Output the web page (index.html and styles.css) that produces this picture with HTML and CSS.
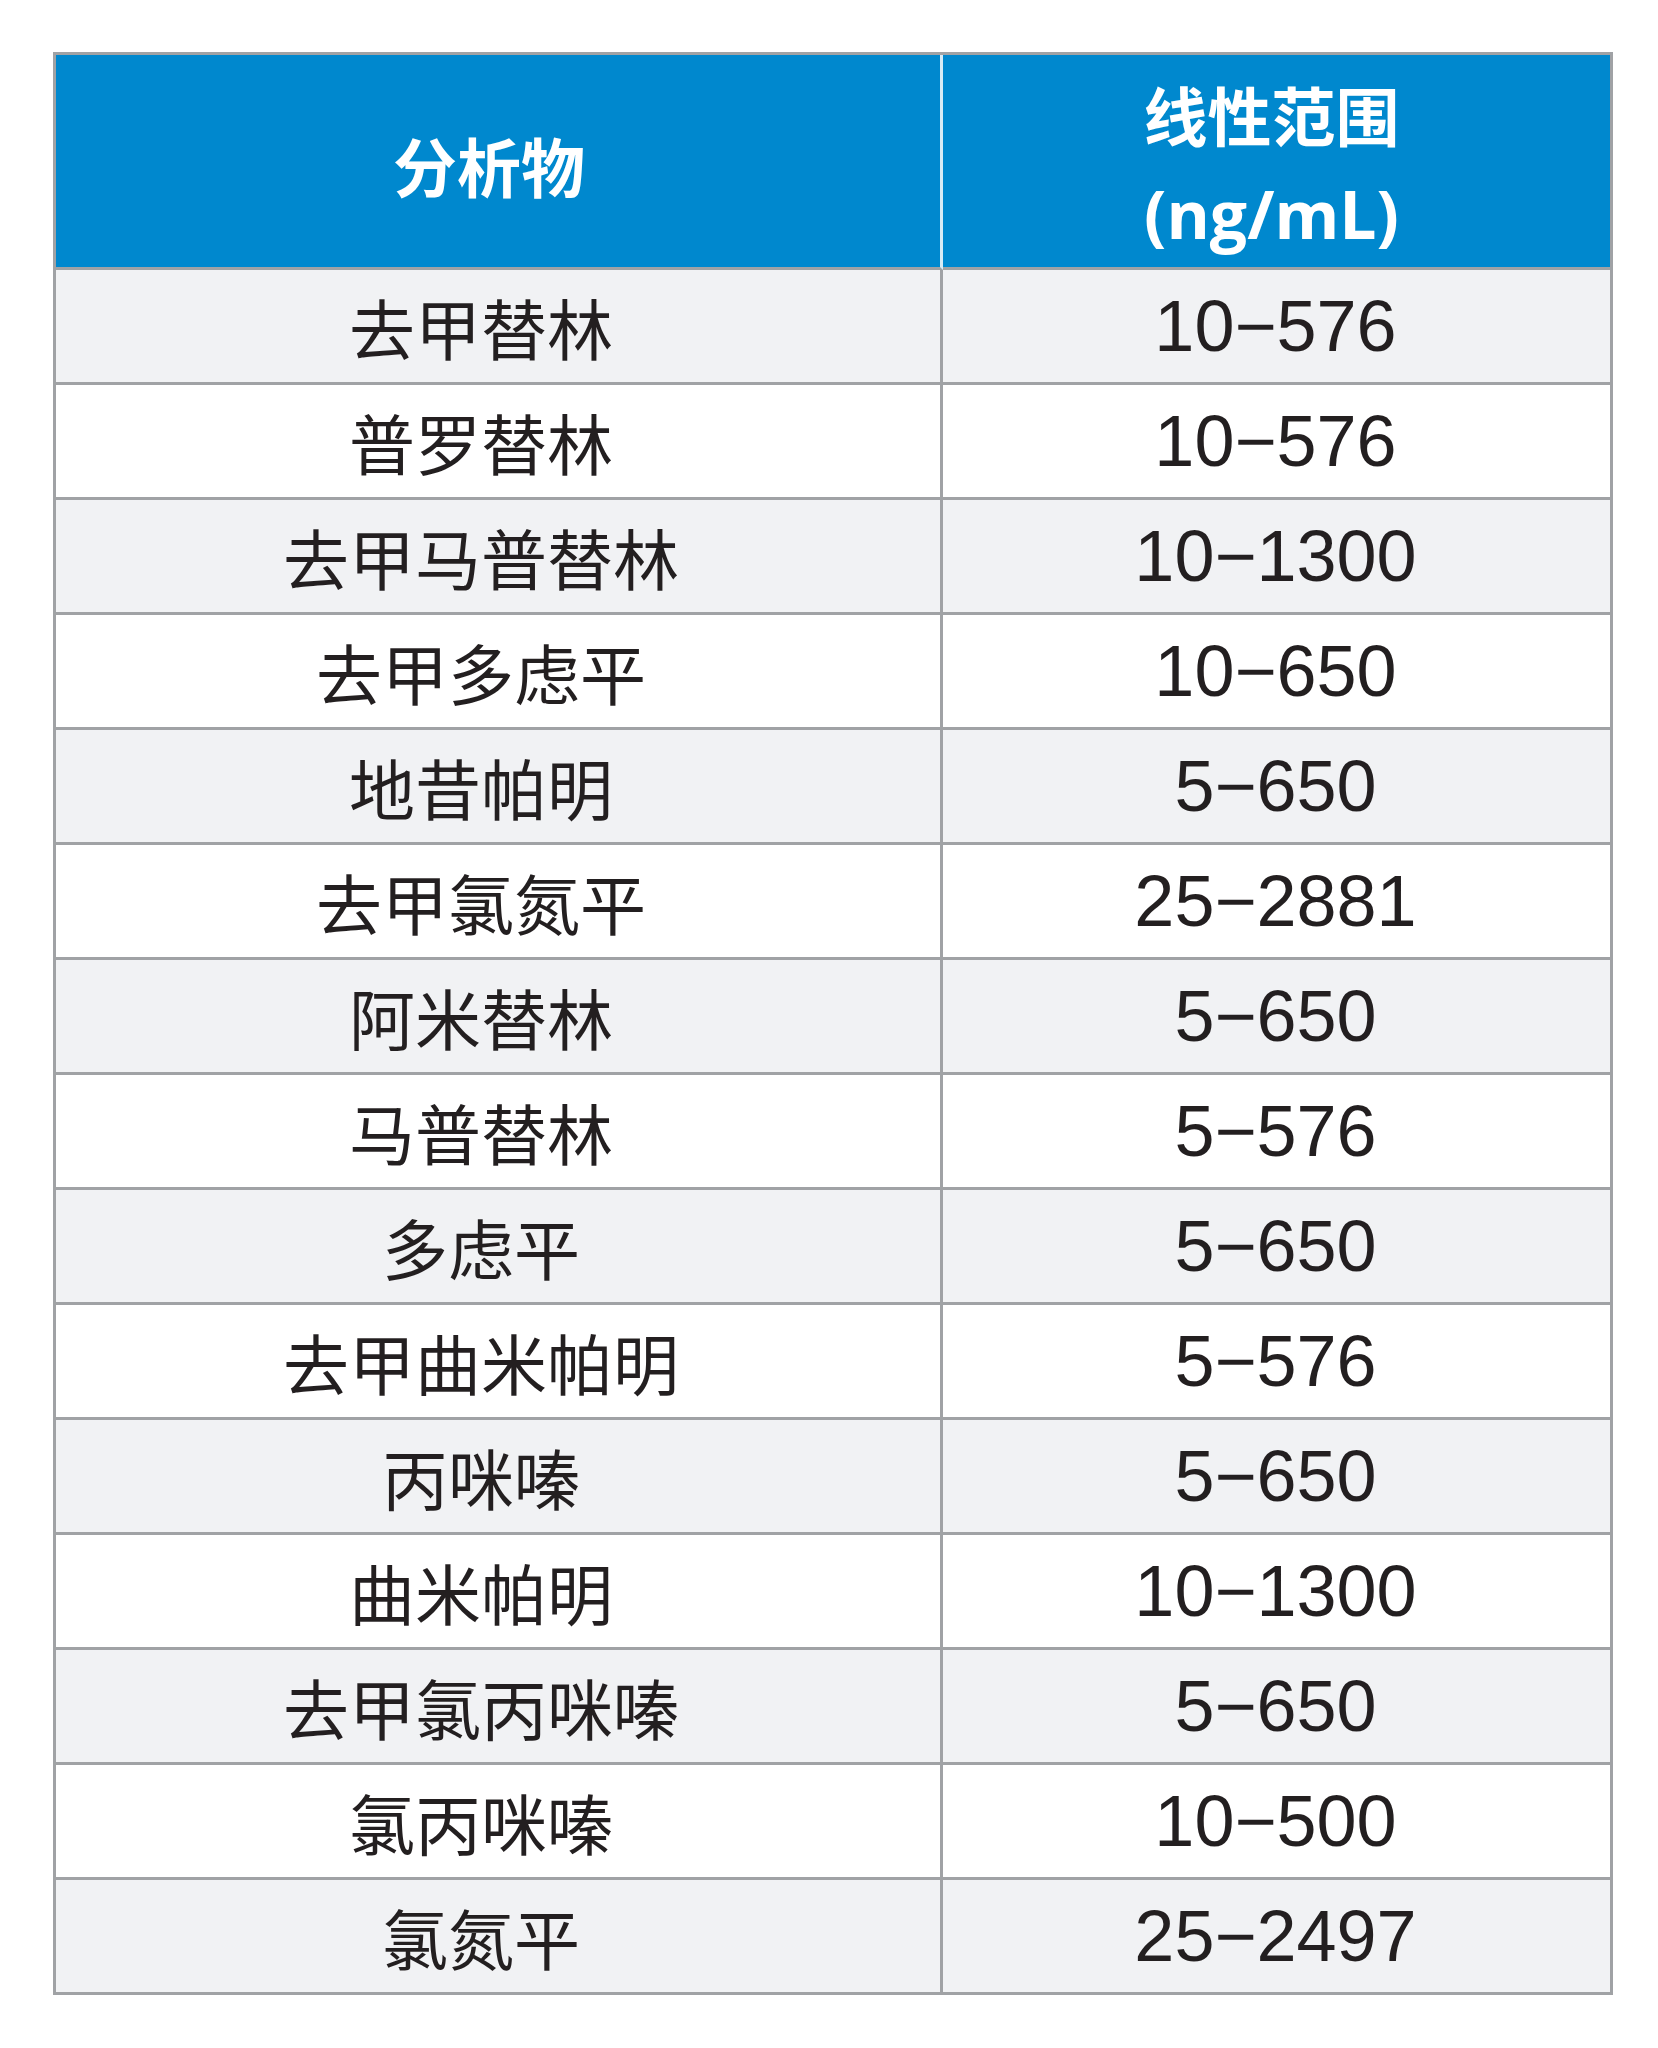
FILE: index.html
```html
<!DOCTYPE html>
<html lang="zh-CN">
<head>
<meta charset="utf-8">
<title>线性范围</title>
<link rel="stylesheet" href="styles.css">
</head>
<body>
<div class="table">
  <div class="cell head name">分析物</div>
  <div class="cell head range"><span>线性范围</span><span class="unit">(ng/mL)</span></div>

  <div class="cell name shade">去甲替林</div><div class="cell num shade">10−576</div>
  <div class="cell name">普罗替林</div><div class="cell num">10−576</div>
  <div class="cell name shade">去甲马普替林</div><div class="cell num shade">10−1300</div>
  <div class="cell name">去甲多虑平</div><div class="cell num">10−650</div>
  <div class="cell name shade">地昔帕明</div><div class="cell num shade">5−650</div>
  <div class="cell name">去甲氯氮平</div><div class="cell num">25−2881</div>
  <div class="cell name shade">阿米替林</div><div class="cell num shade">5−650</div>
  <div class="cell name">马普替林</div><div class="cell num">5−576</div>
  <div class="cell name shade">多虑平</div><div class="cell num shade">5−650</div>
  <div class="cell name">去甲曲米帕明</div><div class="cell num">5−576</div>
  <div class="cell name shade">丙咪嗪</div><div class="cell num shade">5−650</div>
  <div class="cell name">曲米帕明</div><div class="cell num">10−1300</div>
  <div class="cell name shade">去甲氯丙咪嗪</div><div class="cell num shade">5−650</div>
  <div class="cell name">氯丙咪嗪</div><div class="cell num">10−500</div>
  <div class="cell name shade">氯氮平</div><div class="cell num shade">25−2497</div>
</div>
</body>
</html>
```

FILE: styles.css
```css
html, body {
  margin: 0;
  padding: 0;
  background: #ffffff;
}

body {
  padding: 52px 0 0 53px;
  font-family: "Noto Sans CJK SC", "Noto Sans", sans-serif;
  color: #231f20;
}

.table {
  display: grid;
  grid-template-columns: 887px 670px;
  grid-template-rows: 215px;
  grid-auto-rows: 115px;
  width: 1557px;
  border-top: 3px solid #a0a2a5;
  border-left: 3px solid #a0a2a5;
}

.cell {
  display: flex;
  align-items: center;
  justify-content: center;
  border-right: 3px solid #a0a2a5;
  border-bottom: 3px solid #a0a2a5;
  background: #ffffff;
  box-sizing: border-box;
}

.cell.shade {
  background: #f1f2f4;
}

.cell.name {
  font-family: "Noto Sans CJK SC", sans-serif;
  font-size: 66px;
  padding-right: 34px;
}

.cell.num {
  font-family: "Liberation Sans", Arial, sans-serif;
  font-size: 72px;
  padding-right: 2px;
}

.cell.head {
  background: #0088ce;
  color: #ffffff;
  font-weight: 700;
  font-size: 64px;
  font-family: "Open Sans", "Noto Sans CJK SC", sans-serif;
}

.cell.head.name {
  border-right-color: #d7ebf6;
  padding-right: 18px;
  padding-top: 6px;
}

.cell.head.range {
  flex-direction: column;
  line-height: 96px;
  padding-top: 8px;
  padding-right: 10px;
}

.unit {
  font-size: 66px;
}
```
